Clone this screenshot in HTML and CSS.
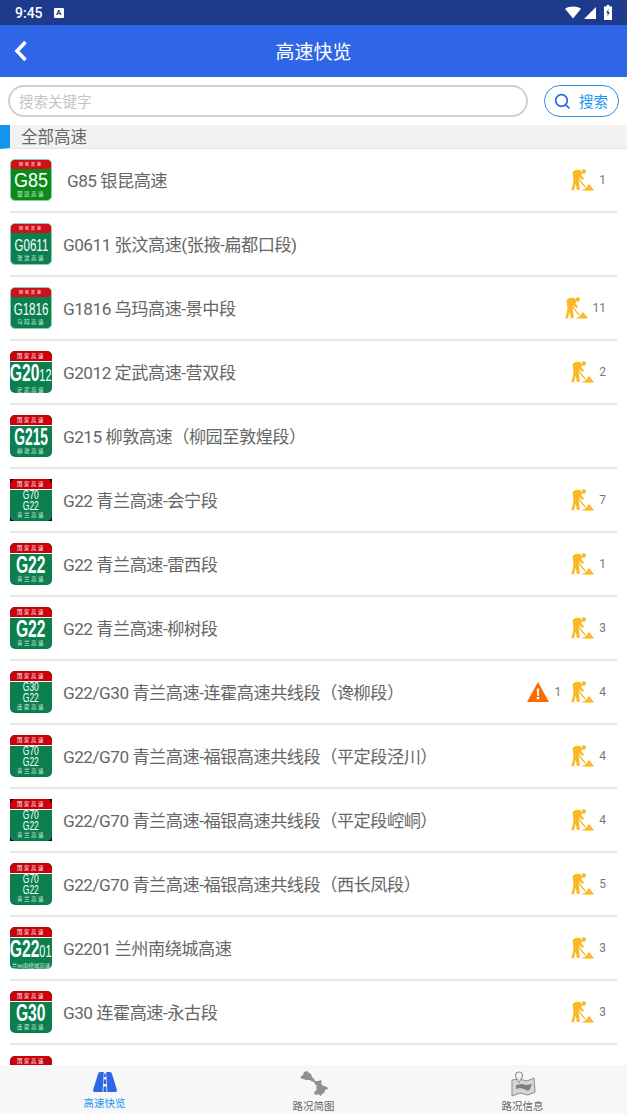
FILE: index.html
```html
<!DOCTYPE html>
<html lang="zh-CN">
<head>
  <meta charset="UTF-8" />
  <meta name="viewport" content="width=device-width, initial-scale=1.0" />
  <title>高速快览</title>
  <link rel="stylesheet" href="styles.css">
</head>
<body>

  <svg class="defs" width="0" height="0">
    <symbol id="worker" viewBox="0 0 22 21">
      <circle cx="12.200" cy="2.400" r="2.100"/>
      <path d="M1.500 2.500L5 .8l4 .2 2 3.500-1.200 1.500 2.600 3-1.400 1.400-3-2.600-.6 2.700 1 9.500H5.600L4.600 14l-2 6.500H.4l2-9z"/>
      <path d="M7 8.200l7.200 8.800-.9.8L6.200 9z"/>
      <path d="M9.800 20.500l3.800-1.600 1.800-2.200 1.700-2.700 5 6.500z"/>
    </symbol>
  </svg>

  <div class="status-bar">
    <span class="status-time">9:45</span>
    <span class="status-a">A</span>
    <span class="status-right">
      <svg width="16" height="13" viewBox="0 0 17 13"><path d="M0 2.400C2.300.8 5.200 0 8.500 0s6.200.8 8.500 2.400L8.500 13z" fill="#fff"/></svg>
      <svg width="12" height="12" viewBox="0 0 12 12"><path d="M12 0v12H0z" fill="#fff"/></svg>
      <svg class="status-batt" width="8" height="15" viewBox="0 0 8 15"><path d="M2.500 0h3v1.500H8V15H0V1.500h2.500z" fill="#fff"/><path d="M4.600 3.500L2.300 8.200h1.500l-.4 3.500 2.300-4.700H4.200z" fill="#1e3a8a"/></svg>
    </span>
  </div>

  <header class="app-bar">
    <svg class="back" width="14" height="22" viewBox="0 0 14 22"><path d="M11.500 2L3 11l8.500 9" fill="none" stroke="#fff" stroke-width="3.600"/></svg>
    <h1>高速快览</h1>
  </header>

  <div class="search-row">
    <div class="search-input">搜索关键字</div>
    <div class="search-btn">
      <svg width="17" height="17" viewBox="0 0 17 17"><circle cx="7.500" cy="7.500" r="5.800" fill="none" stroke="#2f66e8" stroke-width="1.700"/><path d="M11.800 11.800l3.700 3.700" stroke="#2f66e8" stroke-width="1.700"/></svg>
      <span>搜索</span>
    </div>
  </div>

  <div class="section-title"><span>全部高速</span></div>

  <main class="list">

    <div class="row">
      <div class="shield old bright"><div class="top">国家高速</div><div class="code big">G85</div><div class="sub">银昆高速</div></div>
      <div class="name first">G85 银昆高速</div>
      <div class="stat"><svg class="ico-work"><use href="#worker"/></svg><span>1</span></div>
    </div>

    <div class="row">
      <div class="shield old"><div class="top">国家高速</div><div class="code thin">G0611</div><div class="sub">张汶高速</div></div>
      <div class="name">G0611 张汶高速(张掖-扁都口段)</div>
    </div>

    <div class="row">
      <div class="shield old"><div class="top">国家高速</div><div class="code thin">G1816</div><div class="sub">乌玛高速</div></div>
      <div class="name">G1816 乌玛高速-景中段</div>
      <div class="stat"><svg class="ico-work"><use href="#worker"/></svg><span>11</span></div>
    </div>

    <div class="row">
      <div class="shield"><div class="top">国家高速</div><div class="code bold">G20<small>12</small></div><div class="sub">定武高速</div></div>
      <div class="name">G2012 定武高速-营双段</div>
      <div class="stat"><svg class="ico-work"><use href="#worker"/></svg><span>2</span></div>
    </div>

    <div class="row">
      <div class="shield"><div class="top">国家高速</div><div class="code bold slim">G215</div><div class="sub">柳敦高速</div></div>
      <div class="name">G215 柳敦高速（柳园至敦煌段）</div>
    </div>

    <div class="row">
      <div class="shield dark"><div class="top">国家高速</div><div class="code two">G70<br>G22</div><div class="sub">青兰高速</div></div>
      <div class="name">G22 青兰高速-会宁段</div>
      <div class="stat"><svg class="ico-work"><use href="#worker"/></svg><span>7</span></div>
    </div>

    <div class="row">
      <div class="shield"><div class="top">国家高速</div><div class="code bold">G22</div><div class="sub">青兰高速</div></div>
      <div class="name">G22 青兰高速-雷西段</div>
      <div class="stat"><svg class="ico-work"><use href="#worker"/></svg><span>1</span></div>
    </div>

    <div class="row">
      <div class="shield"><div class="top">国家高速</div><div class="code bold">G22</div><div class="sub">青兰高速</div></div>
      <div class="name">G22 青兰高速-柳树段</div>
      <div class="stat"><svg class="ico-work"><use href="#worker"/></svg><span>3</span></div>
    </div>

    <div class="row">
      <div class="shield"><div class="top">国家高速</div><div class="code two">G30<br>G22</div><div class="sub">连霍高速</div></div>
      <div class="name">G22/G30 青兰高速-连霍高速共线段（谗柳段）</div>
      <div class="stat warn">
        <svg class="ico-warn" viewBox="0 0 22 20"><path d="M11 0l11 20H0z" fill="#ff6a00"/><path d="M9.800 6.500h2.400l-.4 7.500h-1.600zM9.800 15h2.400v2.300H9.800z" fill="#fff"/></svg>
        <span>1</span>
      </div>
      <div class="stat"><svg class="ico-work"><use href="#worker"/></svg><span>4</span></div>
    </div>

    <div class="row">
      <div class="shield"><div class="top">国家高速</div><div class="code two">G70<br>G22</div><div class="sub">青兰高速</div></div>
      <div class="name">G22/G70 青兰高速-福银高速共线段（平定段泾川）</div>
      <div class="stat"><svg class="ico-work"><use href="#worker"/></svg><span>4</span></div>
    </div>

    <div class="row">
      <div class="shield dark"><div class="top">国家高速</div><div class="code two">G70<br>G22</div><div class="sub">青兰高速</div></div>
      <div class="name">G22/G70 青兰高速-福银高速共线段（平定段崆峒）</div>
      <div class="stat"><svg class="ico-work"><use href="#worker"/></svg><span>4</span></div>
    </div>

    <div class="row">
      <div class="shield"><div class="top">国家高速</div><div class="code two">G70<br>G22</div><div class="sub">青兰高速</div></div>
      <div class="name">G22/G70 青兰高速-福银高速共线段（西长凤段）</div>
      <div class="stat"><svg class="ico-work"><use href="#worker"/></svg><span>5</span></div>
    </div>

    <div class="row">
      <div class="shield"><div class="top">国家高速</div><div class="code bold">G22<small>01</small></div><div class="sub tiny">兰州南绕城高速</div></div>
      <div class="name">G2201 兰州南绕城高速</div>
      <div class="stat"><svg class="ico-work"><use href="#worker"/></svg><span>3</span></div>
    </div>

    <div class="row">
      <div class="shield"><div class="top">国家高速</div><div class="code bold">G30</div><div class="sub">连霍高速</div></div>
      <div class="name">G30 连霍高速-永古段</div>
      <div class="stat"><svg class="ico-work"><use href="#worker"/></svg><span>3</span></div>
    </div>

    <div class="row">
      <div class="shield"><div class="top">国家高速</div></div>
    </div>

  </main>

  <nav class="tabs">
    <div class="tab active">
      <svg width="24" height="20" viewBox="0 0 24 20"><path d="M7 0h3.800L9.600 20H2Q-.5 20 .2 17.500L5 2Q5.500 0 7 0zM13.200 0H17q1.500 0 2 2l4.800 15.500q.7 2.500-1.800 2.500h-7.600zM11.200 1.500h1.600l.2 3.500h-2zM10.900 7.500h2.200l.2 4.500h-2.600zM10.600 14.500h2.800l.2 5.500h-3.200z" fill="#2f66e8"/></svg>
      <span>高速快览</span>
    </div>
    <div class="tab">
      <svg width="32" height="26" viewBox="0 0 32 26"><path d="M2 6l3-2 1-3 3-1 2 2 2 1 1 3 2 2 1 2h4l1-1 2 1-1 2 1 2 2 1 3 1 1 2-3 1-1 3-2 1-1 2-3-2-1 1-3-1 1-3 2-1-1-2 1-2-2-2-1-2-3-1-1-1-4 0-3-1-2-1z" fill="#8f8f8f"/></svg>
      <span>路况简图</span>
    </div>
    <div class="tab">
      <svg width="26" height="26" viewBox="0 0 26 26"><path d="M2 9l7-1 8 2 7-3 1 14-7 3-8-2-8 3z" fill="#d6d6d6" stroke="#8e8e8e"/><path d="M6 14l6-1 5 1 5-1-2 5-2 2-4-2-4-1-4 1z" fill="#7e7e7e"/><circle cx="9" cy="4.500" r="3.500" fill="#f4f4f4" stroke="#9a9a9a" stroke-width="1.200"/><path d="M6.500 7l2.500 5 2.500-5" fill="#e8e8e8" stroke="#9a9a9a"/></svg>
      <span>路况信息</span>
    </div>
  </nav>

</body>
</html>
```

FILE: styles.css
```css
* {
  box-sizing: border-box;
}
html, body {
  height: 100%;
}
body {
  margin: 0;
  display: flex;
  flex-direction: column;
  height: 1114px;
  overflow: hidden;
  background: #fff;
  font-family: Roboto, "Noto Sans CJK SC", sans-serif;
  color: #666;
}
.defs {
  position: absolute;
}

.status-bar {
  height: 25px;
  flex: none;
  display: flex;
  align-items: center;
  padding: 0 15px 0 15px;
  background: #1e3a8a;
  color: #fff;
  font-size: 14px;
  font-weight: 500;
}
.status-a {
  width: 10px;
  height: 10px;
  margin-left: 11px;
  border-radius: 1px;
  background: #fff;
  color: #1e3a8a;
  font-size: 8px;
  font-weight: 700;
  line-height: 10px;
  text-align: center;
}
.status-right {
  margin-left: auto;
  display: flex;
  align-items: center;
  gap: 3px;
}
.status-batt {
  margin-left: 5px;
}

.app-bar {
  height: 52px;
  flex: none;
  position: relative;
  display: flex;
  align-items: center;
  justify-content: center;
  background: #2f66e8;
}
.app-bar h1 {
  margin: -2px 0 0;
  color: #fff;
  font-size: 19px;
  font-weight: 400;
}
.back {
  position: absolute;
  left: 14px;
  top: 15px;
}

.search-row {
  height: 48px;
  flex: none;
  display: flex;
  justify-content: space-between;
  align-items: center;
  padding: 0 8px 0 8px;
}
.search-input {
  width: 520px;
  height: 32px;
  padding-left: 9px;
  border: 2px solid #d0d0d0;
  border-radius: 16px;
  color: #c4c4c4;
  font-size: 14.500px;
  line-height: 32px;
}
.search-btn {
  width: 75px;
  height: 32px;
  display: flex;
  align-items: center;
  gap: 8px;
  padding-left: 9px;
  border: 1.500px solid #2f8fe0;
  border-radius: 16px;
  color: #2196f3;
  font-size: 14.500px;
  line-height: 26px;
}
.search-btn span {
  margin-top: 3px;
}

.section-title {
  height: 24px;
  flex: none;
  background: #f2f2f2;
  border-left: 10px solid #1296f0;
  border-bottom: 1px solid #e4e4e4;
  font-size: 16.500px;
  line-height: 25px;
}
.section-title span {
  margin-left: 11px;
}

.list {
  flex: 1;
  min-height: 0;
  overflow: hidden;
}
.row {
  height: 64px;
  margin: 0 10px;
  display: flex;
  align-items: center;
  gap: 11px;
  padding-right: 11px;
  border-bottom: 2px solid #e8e8e8;
}
.row:last-child {
  border-bottom: none;
}
.name {
  flex: 1;
  font-size: 17.200px;
  letter-spacing: -0.500px;
  line-height: 22px;
  margin-top: 2px;
  white-space: nowrap;
}
.name.first {
  padding-left: 4px;
}
.stat {
  display: flex;
  align-items: center;
  gap: 5px;
  color: #777;
  font-size: 12px;
}
.stat span {
  margin-top: -1px;
}
.stat.warn {
  margin-right: -1px;
}
.stat.warn span {
  margin-left: 1px;
}
.ico-work {
  width: 23px;
  height: 22px;
  fill: #fbb726;
}
.ico-warn {
  width: 22px;
  height: 20px;
}

.shield {
  position: relative;
  width: 42px;
  height: 42px;
  flex: none;
  display: flex;
  flex-direction: column;
  align-items: center;
  overflow: hidden;
  border-radius: 5px;
  background: #0a8050;
  color: #fff;
  text-align: center;
}
.shield .top {
  width: 100%;
  height: 11px;
  flex: none;
  border-bottom: 1px solid #fff;
  background: #c8000a;
  font-size: 5.500px;
  letter-spacing: 1.500px;
  line-height: 10px;
}
.shield .code {
  flex: 1;
  font-family: "Liberation Sans", sans-serif;
  white-space: nowrap;
}
.code.bold {
  font-size: 23px;
  font-weight: 700;
  line-height: 22px;
  transform: scaleX(0.68);
}
.code.bold.slim {
  transform: scaleX(0.6);
}
.code.bold small {
  font-size: 16px;
  font-weight: 400;
}
.code.big {
  font-size: 20px;
  line-height: 22px;
  transform: scaleX(0.9);
}
.code.thin {
  padding-top: 3px;
  font-size: 16px;
  line-height: 19px;
  transform: scaleX(0.72);
}
.code.two {
  font-size: 12.500px;
  line-height: 11px;
  transform: scaleX(0.68);
}
.shield .sub {
  height: 9px;
  flex: none;
  font-size: 5.500px;
  letter-spacing: 1.500px;
  line-height: 7px;
  opacity: 0.85;
}
.shield .sub.tiny {
  letter-spacing: 0;
  white-space: nowrap;
}
.shield.old {
  border: 1px solid #8fcfa5;
}
.shield.old .top {
  height: 9px;
  border-bottom: none;
  background: #d0101a;
  font-size: 4px;
  line-height: 9px;
  letter-spacing: 2px;
}
.shield.bright {
  background: #0b8a1a;
}
/* square icons: black shows in the four corners */
.shield.dark {
  border-radius: 0;
}
.shield.dark::after {
  content: "";
  position: absolute;
  inset: 0;
  border-radius: 5px;
  box-shadow: 0 0 0 4px #000;
}

.tabs {
  height: 49px;
  flex: none;
  display: grid;
  grid-template-columns: repeat(3, 1fr);
  background: #f7f7f7;
}
.tab {
  display: flex;
  flex-direction: column;
  align-items: center;
  gap: 3px;
  padding-top: 6px;
  color: #666;
  font-size: 10.500px;
  line-height: 14px;
}
.tab.active {
  gap: 5px;
  color: #2196f3;
  padding-top: 7px;
}
```
